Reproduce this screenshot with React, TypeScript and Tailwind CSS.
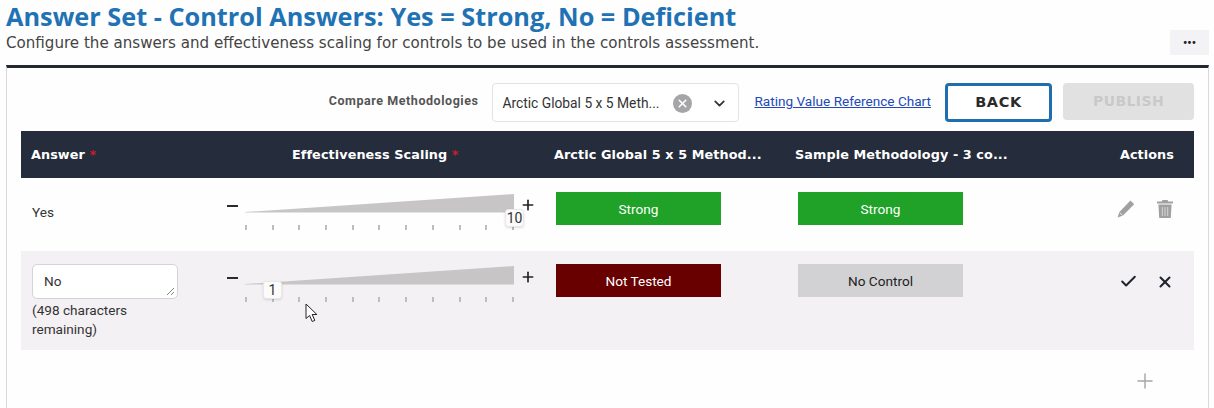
import { Check, ChevronDown, Plus, X } from "lucide-react";

const SANS = "font-['Roboto','Liberation_Sans',sans-serif]";
const HEAD = "font-['DejaVu_Sans','Liberation_Sans',sans-serif]";
const TICKS = Array.from({ length: 11 }, (_, i) => i);

function Slider({ value, left }: { value: string; left: string }) {
  return (
    <div className="flex items-start">
      <div className="w-[23px] pl-[5px] pt-[3px] text-[#222]">
        <div className="mt-[8px] h-[2px] w-[11px] bg-[#2b2b2b]" />
      </div>
      <div className="relative w-[269px]">
        <svg width="269" height="19" viewBox="0 0 269 19" className="block">
          <polygon points="0,18 269,0 269,18.5 0,18.5" fill="#c8c5c7" />
        </svg>
        <div className="mt-[12px] flex justify-between">
          {TICKS.map((t) => (
            <span key={t} className="h-[5px] w-[2px] bg-[#bdbdc0]" />
          ))}
        </div>
        <div
          className={`absolute top-[15px] flex h-[18px] w-[19px] items-center justify-center rounded-[3px] border border-[#e8e8e8] bg-[#fbfbfb] text-[14px] text-[#333] shadow-sm ${left}`}
        >
          {value}
        </div>
      </div>
      <Plus size={16} strokeWidth={2.5} className="ml-[6px] mt-[3px] text-[#222]" />
    </div>
  );
}

function Swatch({ label, className }: { label: string; className: string }) {
  return (
    <div className={`flex h-[33px] w-[165px] items-center justify-center pt-[2px] text-[13.6px] ${className}`}>
      {label}
    </div>
  );
}

function Pencil() {
  return (
    <svg width="20" height="20" viewBox="0 0 20 20" fill="#a0a0a0">
      <path d="M14.4 1.6 18.2 5.2 7 16.6 1.6 18.6 3.4 13Z" />
      <path d="M3.8 13.6 6.4 16.2" stroke="#fff" strokeWidth="0.8" />
    </svg>
  );
}

function Trash() {
  return (
    <svg width="18" height="20" viewBox="0 0 18 20" fill="#a0a0a0">
      <path d="M6.5 1h5l.8 1.6H17v2H1v-2h4.7Z" />
      <path d="M2.4 5.6h13.2L14.8 19H3.2Z" />
      <path d="M6.3 8v9M9 8v9M11.7 8v9" stroke="#e4e4e4" strokeWidth="0.8" />
    </svg>
  );
}

function Cursor() {
  return (
    <svg width="15" height="20" viewBox="0 0 15 20" className="absolute left-[305px] top-[303px]">
      <path d="M1 1v14.5l3.6-3 2.6 6 2.6-1.1-2.6-5.9h4.7Z" fill="#fff" stroke="#222" strokeWidth="1" />
    </svg>
  );
}

export default function App() {
  return (
    <div className={`relative h-[408px] w-[1214px] overflow-hidden bg-[#fefefe] ${SANS}`}>
      <div className="px-[6px] pr-[5px]">
        <div className="flex items-start justify-between">
          <div>
            <h1 className="mt-[2px] font-['Open_Sans','Liberation_Sans',sans-serif] text-[25.3px] font-bold leading-[29px] text-[#1f72b4]">
              Answer Set - Control Answers: Yes = Strong, No = Deficient
            </h1>
            <p className={`mt-[2px] text-[15.1px] leading-[20px] text-[#444] ${HEAD}`}>
              Configure the answers and effectiveness scaling for controls to be used in the controls assessment.
            </p>
          </div>
          <button className="mt-[30px] flex h-[25px] w-[39px] items-center justify-center bg-[#f3f2f5] text-[12px] font-bold leading-none text-[#222]">
            •••
          </button>
        </div>

        <div className="mt-[10px] h-[411px] border-x border-[#d9d9d9] border-t-[3px] border-t-[#23282f] px-[14px]">
          <div className="flex h-[63px] items-start justify-end pr-0 pt-[15px]">
            <span className="mt-[10px] text-[12.5px] font-bold leading-[16px] tracking-[0.55px] text-[#555]">Compare Methodologies</span>
            <div className="ml-[14px] flex h-[39px] w-[247px] items-center rounded-[4px] border border-[#e3e3e3] bg-white pl-[9px] pt-[1px] text-[13.8px] text-[#333]">
              <span>Arctic Global 5 x 5 Meth...</span>
              <span className="ml-[14px] flex h-[19px] w-[19px] items-center justify-center rounded-full bg-[#a5a5a8] text-white">
                <X size={13} strokeWidth={3} />
              </span>
              <ChevronDown size={17} strokeWidth={2.5} className="ml-[19px] text-[#333]" />
            </div>
            <a href="#" className="ml-[15px] mt-[9px] text-[13.6px] leading-[18px] text-[#2349b8] underline">
              Rating Value Reference Chart
            </a>
            <button className={`ml-[14px] h-[39px] w-[107px] rounded-[4px] border-[3px] border-[#1f6fb0] bg-white text-[14.5px] font-bold tracking-[0.6px] text-[#2a2a2a] ${HEAD}`}>
              BACK
            </button>
            <button className={`ml-[11px] h-[37px] w-[131px] rounded-[4px] bg-[#e1e1e1] text-[14px] font-bold tracking-[0.4px] text-[#c9c9c9] ${HEAD}`}>
              PUBLISH
            </button>
          </div>

          <div className={`grid h-[47px] grid-cols-[271px_262px_241px_1fr] items-center bg-[#252c3b] text-[12.8px] font-bold tracking-[0.08px] text-white ${HEAD}`}>
            <div className="pl-[10px]">
              Answer <span className="text-[#c81e2a]">*</span>
            </div>
            <div>
              Effectiveness Scaling <span className="text-[#c81e2a]">*</span>
            </div>
            <div>Arctic Global 5 x 5 Method...</div>
            <div className="flex justify-between pr-[20px]">
              <span>Sample Methodology - 3 co...</span>
              <span>Actions</span>
            </div>
          </div>

          <div className="grid h-[73px] grid-cols-[201px_334px_242px_1fr] items-start">
            <div className="pl-[11px] pt-[25px] text-[13.6px] leading-[18px] text-[#333]">Yes</div>
            <div className="pt-[16px]">
              <Slider value="10" left="left-[260px]" />
            </div>
            <div className="pt-[14px]">
              <Swatch label="Strong" className="bg-[#20a228] text-white" />
            </div>
            <div className="flex items-start justify-between pr-[20px] pt-[14px]">
              <Swatch label="Strong" className="bg-[#20a228] text-white" />
              <div className="mt-[7px] flex items-center gap-[20px]">
                <Pencil />
                <Trash />
              </div>
            </div>
          </div>

          <div className="grid h-[99px] grid-cols-[201px_334px_242px_1fr] items-start bg-[#f4f1f4]">
            <div className="pl-[11px] pt-[13px]">
              <div className="relative flex h-[35px] w-[146px] items-center rounded-[5px] border border-[#d4d4d4] bg-white pl-[11px] text-[13.6px] text-[#333]">
                No
                <svg width="9" height="9" viewBox="0 0 9 9" className="absolute bottom-[2px] right-[2px]">
                  <path d="M1 8 8 1M5 8 8 5" stroke="#666" strokeWidth="0.8" />
                </svg>
              </div>
              <p className="mt-[2px] text-[13.6px] leading-[19px] text-[#333]">
                (498 characters
                <br />
                remaining)
              </p>
            </div>
            <div className="pt-[15px]">
              <Slider value="1" left="left-[18px]" />
            </div>
            <div className="pt-[13px]">
              <Swatch label="Not Tested" className="bg-[#680000] text-white" />
            </div>
            <div className="flex items-start justify-between pr-[20px] pt-[13px]">
              <Swatch label="No Control" className="bg-[#d2d1d4] text-[#222]" />
              <div className="mt-[8px] flex items-center gap-[18px] text-[#1f2530]">
                <Check size={19} strokeWidth={2.5} />
                <X size={18} strokeWidth={2.75} />
              </div>
            </div>
          </div>

          <div className="flex justify-end pr-[37px] pt-[19px]">
            <Plus size={24} strokeWidth={1.5} className="text-[#a8a8ac]" />
          </div>
        </div>
      </div>
      <Cursor />
    </div>
  );
}
